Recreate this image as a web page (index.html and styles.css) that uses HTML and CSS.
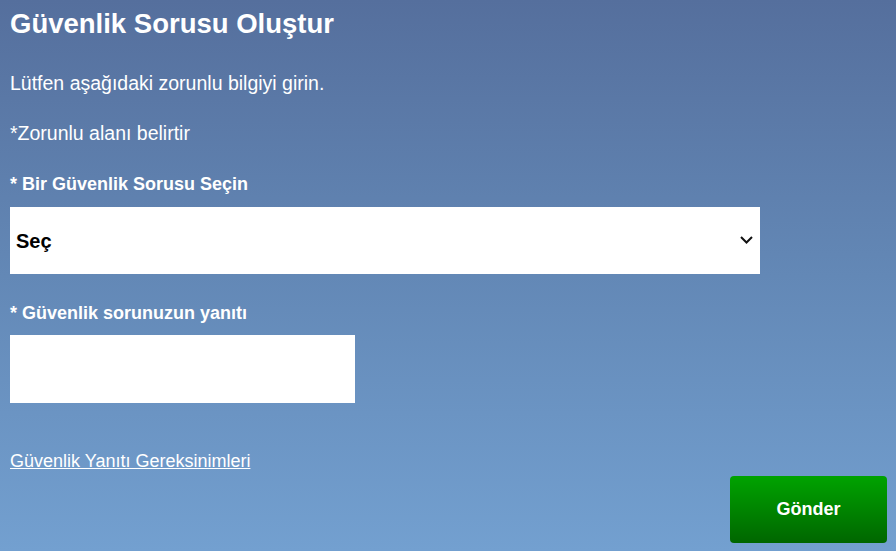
FILE: index.html
```html
<!DOCTYPE html>
<html lang="tr">
<head>
  <meta charset="UTF-8" />
  <meta name="viewport" content="width=device-width, initial-scale=1" />
  <title>Güvenlik Sorusu Oluştur</title>
  <link rel="stylesheet" href="styles.css">
</head>
<body>

  <form class="page" onsubmit="return false">
    <h1 class="title">Güvenlik Sorusu Oluştur</h1>
    <p class="intro">Lütfen aşağıdaki zorunlu bilgiyi girin.</p>
    <p class="required-note">*Zorunlu alanı belirtir</p>

    <label class="field-label" for="question">* Bir Güvenlik Sorusu Seçin</label>
    <div class="select-wrap">
      <select id="question" class="question-select">
        <option>Seç</option>
        <option>İlk evcil hayvanınızın adı nedir?</option>
        <option>Doğduğunuz şehir neresidir?</option>
      </select>
      <svg class="chevron" width="13" height="8" viewBox="0 0 13 8">
        <path d="M1 1l5.5 5.5L12 1" fill="none" stroke="#111" stroke-width="2" />
      </svg>
    </div>

    <label class="field-label answer-label" for="answer">* Güvenlik sorunuzun yanıtı</label>
    <input type="text" id="answer" class="answer-input" />

    <a href="#" class="req-link">Güvenlik Yanıtı Gereksinimleri</a>

    <button type="submit" class="submit-btn">Gönder</button>
  </form>

</body>
</html>
```

FILE: styles.css
```css
:root {
  --text: #ffffff;
  --bg-top: #556f9d;
  --bg-bottom: #73a0d0;
  --btn-top: #00a300;
  --btn-bottom: #006600;
}

* {
  box-sizing: border-box;
}

html, body {
  height: 100%;
}

body {
  margin: 0;
  font-family: "Liberation Sans", Arial, sans-serif;
  color: var(--text);
  background: linear-gradient(180deg, var(--bg-top), #6388b6 50%, var(--bg-bottom));
  overflow: hidden;
}

.page {
  display: flex;
  flex-direction: column;
  align-items: flex-start;
  padding: 8px 9px 0 10px;
}

.title {
  margin: 0;
  font-size: 27.5px;
  line-height: 32px;
  font-weight: 700;
}

.intro,
.required-note {
  margin: 31px 0 0;
  font-size: 19.5px;
  line-height: 24px;
}

.required-note {
  margin-top: 26px;
}

.field-label {
  margin-top: 28px;
  font-size: 18px;
  line-height: 22px;
  font-weight: 700;
}

.answer-label {
  margin-top: 28px;
}

.select-wrap {
  position: relative;
  margin-top: 12px;
  width: 750px;
}

.question-select {
  display: block;
  width: 100%;
  height: 67px;
  padding: 0 30px 0 6px;
  border: none;
  border-radius: 0;
  background: #fff;
  color: #000;
  font-family: inherit;
  font-size: 20px;
  font-weight: 700;
  -webkit-appearance: none;
  appearance: none;
  outline: none;
}

.chevron {
  position: absolute;
  right: 7px;
  top: 29px;
  pointer-events: none;
}

.answer-input {
  margin-top: 11px;
  width: 345px;
  height: 68px;
  border: none;
  border-radius: 0;
  padding: 0 8px;
  font-family: inherit;
  font-size: 18px;
  background: #fff;
  outline: none;
}

.req-link {
  margin-top: 47px;
  color: var(--text);
  font-size: 18px;
  line-height: 22px;
  text-decoration: underline;
}

.submit-btn {
  align-self: flex-end;
  margin-top: 4px;
  width: 157px;
  height: 67px;
  border: none;
  border-radius: 4px;
  background: linear-gradient(180deg, var(--btn-top), var(--btn-bottom));
  color: #fff;
  font-family: inherit;
  font-size: 18px;
  font-weight: 700;
  cursor: pointer;
}

.submit-btn:hover {
  background: linear-gradient(180deg, #00b300, #007300);
}
```
